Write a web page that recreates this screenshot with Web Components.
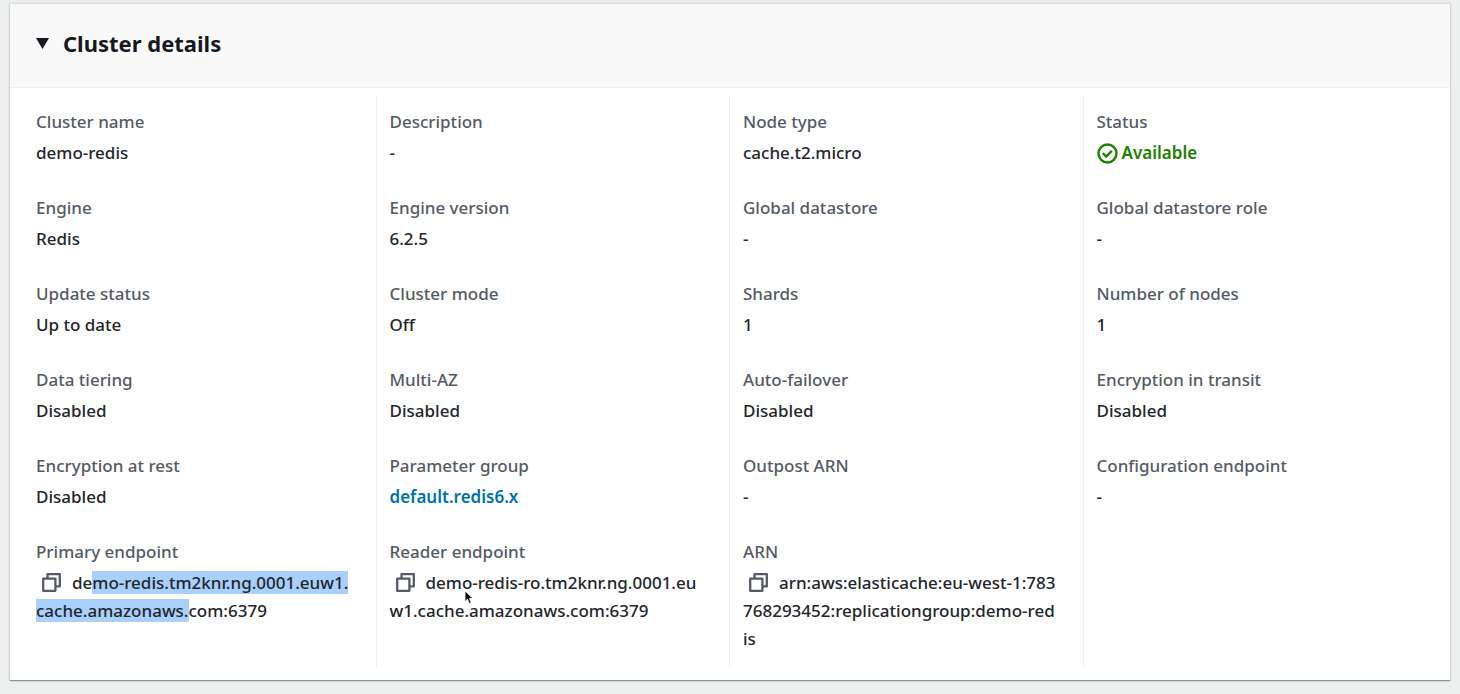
<!DOCTYPE html>
<html lang="en">
<head>
<meta charset="utf-8">
<meta name="viewport" content="width=device-width, initial-scale=1">
<title>Cluster details</title>
<style>
  body {
    margin: 0;
    padding: 4px 10px 13px;
    background: #eef0ef;
    color: #23262b;
    font-family: "Noto Sans", "Open Sans", sans-serif;
    font-size: 17px;
    font-weight: 500;
    line-height: 28px;
  }
</style>
</head>
<body>
<details-panel>
  <span slot="title">Cluster details</span>
  <detail-column>
    <detail-item label="Cluster name">demo-redis</detail-item>
    <detail-item label="Engine">Redis</detail-item>
    <detail-item label="Update status">Up to date</detail-item>
    <detail-item label="Data tiering">Disabled</detail-item>
    <detail-item label="Encryption at rest">Disabled</detail-item>
    <detail-item label="Primary endpoint"><copy-text>de<text-mark>mo-redis.tm2knr.ng.0001.euw1.<br>cache.amazonaws.</text-mark>com:6379</copy-text></detail-item>
  </detail-column>
  <detail-column divided>
    <detail-item label="Description">-</detail-item>
    <detail-item label="Engine version">6.2.5</detail-item>
    <detail-item label="Cluster mode">Off</detail-item>
    <detail-item label="Multi-AZ">Disabled</detail-item>
    <detail-item label="Parameter group"><detail-link href="#default.redis6.x">default.redis6.x</detail-link></detail-item>
    <detail-item label="Reader endpoint"><copy-text>demo-redis-ro.tm2knr.ng.0001.eu<br>w1.cache.amazonaws.com:6379</copy-text><mouse-pointer></mouse-pointer></detail-item>
  </detail-column>
  <detail-column divided>
    <detail-item label="Node type">cache.t2.micro</detail-item>
    <detail-item label="Global datastore">-</detail-item>
    <detail-item label="Shards">1</detail-item>
    <detail-item label="Auto-failover">Disabled</detail-item>
    <detail-item label="Outpost ARN">-</detail-item>
    <detail-item label="ARN"><copy-text>arn:aws:elasticache:eu-west-1:783<br>768293452:replicationgroup:demo-red<br>is</copy-text></detail-item>
  </detail-column>
  <detail-column divided>
    <detail-item label="Status"><status-ok>Available</status-ok></detail-item>
    <detail-item label="Global datastore role">-</detail-item>
    <detail-item label="Number of nodes">1</detail-item>
    <detail-item label="Encryption in transit">Disabled</detail-item>
    <detail-item label="Configuration endpoint">-</detail-item>
  </detail-column>
</details-panel>

<script>
  function define(name, html, setup) {
    const template = document.createElement('template');
    template.innerHTML = html;
    customElements.define(name, class extends HTMLElement {
      constructor() {
        super();
        this.attachShadow({ mode: 'open' }).append(template.content.cloneNode(true));
      }
      connectedCallback() {
        if (setup) setup(this, this.shadowRoot);
      }
    });
  }

  define('details-panel', `
    <style>
      :host { display: block; background: #fff; box-shadow: 0 1px 1px #8b9596, 0 0 2px 1px #d3d8d8; }
      header { background: #f9f9f9; border-bottom: 1px solid #eeefef; padding: 25px 26px 30px; }
      h2 { margin: 0; font-size: 22px; line-height: 28px; font-weight: 700; color: #16191f; }
      button { display: flex; align-items: center; gap: 14px; padding: 0; border: 0; background: none; color: inherit; font: inherit; cursor: pointer; }
      svg { display: block; }
      .grid { display: grid; grid-template-columns: repeat(4, minmax(0, 1fr)); padding: 8px 14px 13px 12px; }
      .grid[hidden] { display: none; }
    </style>
    <header><h2><button type="button" aria-expanded="true">
      <svg width="13" height="11" viewBox="0 0 13 11" aria-hidden="true"><path d="M0 0h13L6.500 11z" fill="currentColor"/></svg>
      <slot name="title"></slot>
    </button></h2></header>
    <div class="grid"><slot></slot></div>`, (host, root) => {
      const button = root.querySelector('button');
      button.onclick = () => {
        const grid = root.querySelector('.grid');
        grid.hidden = !grid.hidden;
        button.setAttribute('aria-expanded', String(!grid.hidden));
      };
    });

  define('detail-column', `
    <style>
      :host { display: flex; flex-direction: column; gap: 27px; padding: 12px 12px 14px 14px; }
      :host([divided]) { border-left: 1px solid #eeefef; padding-left: 13px; }
    </style>
    <slot></slot>`);

  define('detail-item', `
    <style>
      :host { display: block; position: relative; }
      .label { color: #545b64; margin-bottom: 3px; }
    </style>
    <div class="label"></div>
    <div class="value"><slot></slot></div>`, (host, root) => {
      root.querySelector('.label').textContent = host.getAttribute('label');
    });

  define('copy-text', `<style>
      :host { display: block; white-space: nowrap; }
      button { display: inline-block; margin: 0 11px 0 6px; padding: 0; border: 0; background: none; color: #545b64; vertical-align: -3px; line-height: 0; cursor: pointer; }
    </style><button type="button" aria-label="Copy"><svg width="19" height="19" viewBox="0 0 19 19" fill="none" stroke="currentColor" stroke-width="2.300" stroke-linejoin="round"><path d="M1.200 5.600h12.200v12.200H1.200z"/><path d="M5.500 5.500V1.200h12.300V13.400H13.400"/></svg></button><slot></slot>`);

  define('text-mark', `<style>
      :host { display: inline; background: #a9d0fa; }
    </style><slot></slot>`);

  define('detail-link', `<style>
      a { color: #0073aa; font-weight: 600; text-decoration: none; }
    </style><a><slot></slot></a>`, (host, root) => {
      root.querySelector('a').setAttribute('href', host.getAttribute('href'));
    });

  define('status-ok', `
    <style>
      :host { display: flex; align-items: center; gap: 4px; color: #1d8102; font-weight: 600; }
    </style>
    <svg width="21" height="21" viewBox="0 0 21 21" fill="none" stroke="currentColor" stroke-width="2.400" aria-hidden="true"><circle cx="10.500" cy="10.500" r="9"/><path d="M5.800 10.200l3.400 3.300 5.600-5.700"/></svg>
    <slot></slot>`);

  define('mouse-pointer', `
    <style>
      :host { position: absolute; left: 74px; top: 52px; pointer-events: none; }
      svg { display: block; }
    </style>
    <svg width="10" height="15" viewBox="0 0 10 15" aria-hidden="true"><path d="M1 1v10.500l2.500-2.300 1.700 4.300 2-.9-1.700-4.100H9z" fill="#111" stroke="#fff" stroke-width=".8"/></svg>`);
</script>
</body>
</html>
